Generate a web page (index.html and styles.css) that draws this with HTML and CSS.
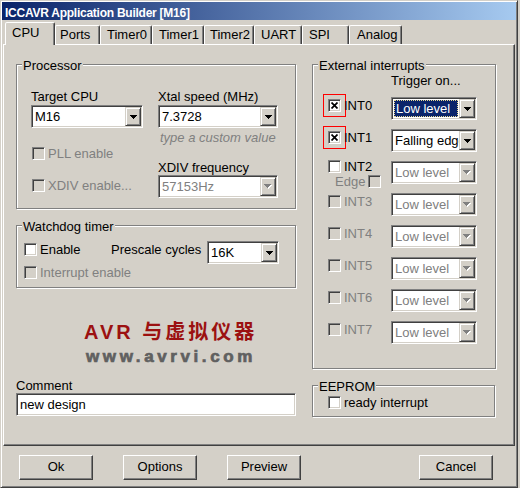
FILE: index.html
```html
<!DOCTYPE html>
<html>
<head>
<meta charset="utf-8">
<title>ICCAVR Application Builder</title>
<link rel="stylesheet" href="styles.css">
</head>
<body>
<div class="window">
  <div class="titlebar">ICCAVR Application Builder [M16]</div>
  <div class="body">
    <div class="tabs">
      <div class="tab sel t-cpu">CPU</div>
      <div class="tab t-ports">Ports</div>
      <div class="tab t-timer0">Timer0</div>
      <div class="tab t-timer1">Timer1</div>
      <div class="tab t-timer2">Timer2</div>
      <div class="tab t-uart">UART</div>
      <div class="tab t-spi">SPI</div>
      <div class="tab t-analog">Analog</div>
    </div>
    <div class="panel">
      <div class="col-left">
        <div class="group proc">
          <div class="gtitle">Processor</div>
          <div class="proc-grid">
            <div class="pcol pcol-a">
              <div class="lbl">Target CPU</div>
              <div class="combo cpu-combo"><span class="val">M16</span><span class="dd"><svg class="arr" width="7" height="4" viewBox="0 0 7 4"><path d="M0 0h7v1h-1v1h-1v1h-1v1h-1v-1h-1v-1h-1v-1h-1z"/></svg></span></div>
              <div class="chk dis pll"><span class="box"></span>PLL enable</div>
              <div class="chk dis xdiv-en"><span class="box"></span>XDIV enable...</div>
            </div>
            <div class="pcol pcol-b">
              <div class="lbl">Xtal speed (MHz)</div>
              <div class="combo xtal-combo"><span class="val">7.3728</span><span class="dd"><svg class="arr" width="7" height="4" viewBox="0 0 7 4"><path d="M0 0h7v1h-1v1h-1v1h-1v1h-1v-1h-1v-1h-1v-1h-1z"/></svg></span></div>
              <div class="hint">type a custom value</div>
              <div class="lbl xdiv-lbl">XDIV frequency</div>
              <div class="combo xtal-combo dis"><span class="val">57153Hz</span><span class="dd"><svg class="arr" width="8" height="5" viewBox="0 0 8 5"><path class="sh" d="M1 1h7v1h-1v1h-1v1h-1v1h-1v-1h-1v-1h-1v-1h-1z"/><path d="M0 0h7v1h-1v1h-1v1h-1v1h-1v-1h-1v-1h-1v-1h-1z"/></svg></span></div>
            </div>
          </div>
        </div>
        <div class="group wdt">
          <div class="gtitle">Watchdog timer</div>
          <div class="wdt-row">
            <div class="chk wdt-en"><span class="box"></span>Enable</div>
            <div class="prescale">Prescale cycles</div>
            <div class="combo k-combo"><span class="val">16K</span><span class="dd"><svg class="arr" width="7" height="4" viewBox="0 0 7 4"><path d="M0 0h7v1h-1v1h-1v1h-1v1h-1v-1h-1v-1h-1v-1h-1z"/></svg></span></div>
          </div>
          <div class="chk dis wdt-int"><span class="box"></span>Interrupt enable</div>
        </div>
        <div class="logo">
          <div class="logo-cn">AVR 与虚拟仪器</div>
          <div class="logo-url">www.avrvi.com</div>
        </div>
        <div class="lbl comment-lbl">Comment</div>
        <div class="textbox">new design</div>
      </div>

      <div class="col-right">
        <div class="group ext">
          <div class="gtitle">External interrupts</div>
          <div class="trig">Trigger on...</div>
          <div class="int-rows">
            <div class="int-row">
              <div class="ileft"><div class="chk"><span class="box on mark"><svg width="7" height="7" viewBox="0 0 7 7"><path d="M0.5 0.5L6.5 6.5M6.5 0.5L0.5 6.5"/></svg></span>INT0</div></div>
              <div class="combo icombo"><span class="val sel">Low level</span><span class="dd"><svg class="arr" width="7" height="4" viewBox="0 0 7 4"><path d="M0 0h7v1h-1v1h-1v1h-1v1h-1v-1h-1v-1h-1v-1h-1z"/></svg></span></div>
            </div>
            <div class="int-row">
              <div class="ileft"><div class="chk"><span class="box on mark"><svg width="7" height="7" viewBox="0 0 7 7"><path d="M0.5 0.5L6.5 6.5M6.5 0.5L0.5 6.5"/></svg></span>INT1</div></div>
              <div class="combo icombo"><span class="val">Falling edge</span><span class="dd"><svg class="arr" width="7" height="4" viewBox="0 0 7 4"><path d="M0 0h7v1h-1v1h-1v1h-1v1h-1v-1h-1v-1h-1v-1h-1z"/></svg></span></div>
            </div>
            <div class="int-row">
              <div class="ileft">
                <div class="chk int2"><span class="box"></span>INT2</div>
                <div class="chk dis edge">Edge<span class="box after"></span></div>
              </div>
              <div class="combo icombo dis"><span class="val">Low level</span><span class="dd"><svg class="arr" width="8" height="5" viewBox="0 0 8 5"><path class="sh" d="M1 1h7v1h-1v1h-1v1h-1v1h-1v-1h-1v-1h-1v-1h-1z"/><path d="M0 0h7v1h-1v1h-1v1h-1v1h-1v-1h-1v-1h-1v-1h-1z"/></svg></span></div>
            </div>
            <div class="int-row">
              <div class="ileft"><div class="chk dis"><span class="box"></span>INT3</div></div>
              <div class="combo icombo dis"><span class="val">Low level</span><span class="dd"><svg class="arr" width="8" height="5" viewBox="0 0 8 5"><path class="sh" d="M1 1h7v1h-1v1h-1v1h-1v1h-1v-1h-1v-1h-1v-1h-1z"/><path d="M0 0h7v1h-1v1h-1v1h-1v1h-1v-1h-1v-1h-1v-1h-1z"/></svg></span></div>
            </div>
            <div class="int-row">
              <div class="ileft"><div class="chk dis"><span class="box"></span>INT4</div></div>
              <div class="combo icombo dis"><span class="val">Low level</span><span class="dd"><svg class="arr" width="8" height="5" viewBox="0 0 8 5"><path class="sh" d="M1 1h7v1h-1v1h-1v1h-1v1h-1v-1h-1v-1h-1v-1h-1z"/><path d="M0 0h7v1h-1v1h-1v1h-1v1h-1v-1h-1v-1h-1v-1h-1z"/></svg></span></div>
            </div>
            <div class="int-row">
              <div class="ileft"><div class="chk dis"><span class="box"></span>INT5</div></div>
              <div class="combo icombo dis"><span class="val">Low level</span><span class="dd"><svg class="arr" width="8" height="5" viewBox="0 0 8 5"><path class="sh" d="M1 1h7v1h-1v1h-1v1h-1v1h-1v-1h-1v-1h-1v-1h-1z"/><path d="M0 0h7v1h-1v1h-1v1h-1v1h-1v-1h-1v-1h-1v-1h-1z"/></svg></span></div>
            </div>
            <div class="int-row">
              <div class="ileft"><div class="chk dis"><span class="box"></span>INT6</div></div>
              <div class="combo icombo dis"><span class="val">Low level</span><span class="dd"><svg class="arr" width="8" height="5" viewBox="0 0 8 5"><path class="sh" d="M1 1h7v1h-1v1h-1v1h-1v1h-1v-1h-1v-1h-1v-1h-1z"/><path d="M0 0h7v1h-1v1h-1v1h-1v1h-1v-1h-1v-1h-1v-1h-1z"/></svg></span></div>
            </div>
            <div class="int-row">
              <div class="ileft"><div class="chk dis"><span class="box"></span>INT7</div></div>
              <div class="combo icombo dis"><span class="val">Low level</span><span class="dd"><svg class="arr" width="8" height="5" viewBox="0 0 8 5"><path class="sh" d="M1 1h7v1h-1v1h-1v1h-1v1h-1v-1h-1v-1h-1v-1h-1z"/><path d="M0 0h7v1h-1v1h-1v1h-1v1h-1v-1h-1v-1h-1v-1h-1z"/></svg></span></div>
            </div>
          </div>
        </div>
        <div class="group eeprom">
          <div class="gtitle">EEPROM</div>
          <div class="chk ee-chk"><span class="box"></span>ready interrupt</div>
        </div>
      </div>
    </div>
    <div class="buttons">
      <div class="btn">Ok</div>
      <div class="btn">Options</div>
      <div class="btn">Preview</div>
      <div class="btn cancel">Cancel</div>
    </div>
  </div>
</div>
</body>
</html>
```

FILE: styles.css
```css
* { box-sizing: border-box; }

body {
  margin: 0;
  width: 520px;
  height: 488px;
  background: #d4d0c8;
  font-family: "Liberation Sans", Arial, sans-serif;
  font-size: 13px;
  line-height: 15px;
  color: #000;
}

.window {
  width: 518px;
  height: 488px;
  border: 1px solid;
  border-color: #d4d0c8 #404040 #404040 #d4d0c8;
  box-shadow: inset 1px 1px #fff, inset -1px -1px #808080;
  padding: 1px;
  background: #d4d0c8;
}

.titlebar {
  height: 18px;
  background: linear-gradient(to right, #0a246a, #a6caf0);
  color: #fff;
  font-weight: bold;
  font-size: 12px;
  letter-spacing: -0.25px;
  line-height: 16px;
  padding: 3px 0 0 3px;
  white-space: nowrap;
  overflow: hidden;
}

.body {
  padding: 0 1px;
}

/* Tabs */
.tabs {
  display: flex;
  align-items: flex-end;
  height: 24px;
  padding-left: 2px;
}

.tab {
  height: 19px;
  border-style: solid;
  border-width: 1px 1px 0 1px;
  border-color: #fff #404040 transparent #fff;
  border-radius: 2px 2px 0 0;
  box-shadow: inset -1px 0 #808080;
  padding-left: 6px;
  line-height: 17px;
  white-space: nowrap;
}

.tab.sel {
  height: 23px;
  margin-bottom: -1px;
  position: relative;
  z-index: 1;
  background: #d4d0c8;
  line-height: 19px;
}

.t-cpu { width: 50px; }
.t-ports { width: 45px; padding-left: 4px; }
.t-timer0 { width: 52px; }
.t-timer1 { width: 52px; }
.t-timer2 { width: 50px; padding-left: 5px; }
.t-uart { width: 48px; }
.t-spi { width: 47px; }
.t-analog { width: 53px; padding-left: 7px; }

/* Panel */
.panel {
  height: 402px;
  border: 1px solid;
  border-color: #fff #404040 #404040 #fff;
  box-shadow: inset -1px -1px #808080;
  display: grid;
  grid-template-columns: 280px 184px;
  column-gap: 16px;
  align-content: start;
  align-items: start;
  padding: 19px 0 0 12px;
}

/* Group boxes */
.group {
  border: 1px solid #808080;
  box-shadow: inset 1px 1px #fff, 1px 1px #fff;
}

.gtitle {
  width: max-content;
  margin: -7px 0 0 5px;
  padding: 0 1px;
  background: #d4d0c8;
  white-space: nowrap;
}

.lbl { white-space: nowrap; }

/* Checkboxes */
.chk {
  display: flex;
  align-items: center;
  height: 15px;
  white-space: nowrap;
}

.box {
  width: 13px;
  height: 13px;
  flex: none;
  margin-right: 3px;
  border: 1px solid;
  border-color: #808080 #fff #fff #808080;
  box-shadow: inset 1px 1px #404040, inset -1px -1px #d4d0c8;
  background: #fff;
  display: flex;
  align-items: center;
  justify-content: center;
}

.box svg path {
  stroke: #000;
  stroke-width: 1.7;
  fill: none;
}

.box.mark {
  outline: 1px solid #ff0000;
  outline-offset: 4px;
}

.box.after {
  margin: 0 0 0 3px;
}

.chk.dis { color: #808080; }
.chk.dis .box { background: #d4d0c8; }

/* Combo boxes */
.combo {
  display: flex;
  height: 23px;
  border: 1px solid;
  border-color: #808080 #fff #fff #808080;
  box-shadow: inset 1px 1px #404040, inset -1px -1px #d4d0c8;
  background: #fff;
  padding: 1px;
}

.combo .val {
  flex: 1;
  min-width: 0;
  padding-left: 2px;
  line-height: 19px;
  white-space: nowrap;
  overflow: hidden;
}

.combo .val.sel {
  margin: 1px 1px 1px 1px;
  padding-left: 1px;
  line-height: 15px;
  background: #0a246a;
  color: #fff;
  border: 1px dotted #e8d890;
}

.combo .dd {
  width: 16px;
  flex: none;
  border: 1px solid;
  border-color: #d4d0c8 #404040 #404040 #d4d0c8;
  box-shadow: inset 1px 1px #fff, inset -1px -1px #808080;
  background: #d4d0c8;
  display: flex;
  align-items: center;
  justify-content: center;
}

.arr { display: block; shape-rendering: crispEdges; }
.arr path { fill: #000; }

.combo.dis .val { color: #808080; }
.combo.dis .arr path { fill: #808080; }
.combo.dis .arr path.sh { fill: #fff; }

/* Processor */
.proc { height: 145px; }

.proc-grid {
  display: flex;
  gap: 15px;
  margin-top: 16px;
  padding-left: 14px;
}

.pcol-a { width: 112px; }
.pcol-b { width: 120px; }

.pcol .lbl { margin-bottom: 1px; }

.pll { margin: 18px 0 0 1px; }
.xdiv-en { margin: 17px 0 0 1px; }

.hint {
  margin-top: 2px;
  padding-left: 2px;
  font-style: italic;
  color: #808080;
  white-space: nowrap;
}

.pcol .xdiv-lbl { margin-top: 15px; margin-bottom: 0; }

/* Watchdog */
.wdt {
  height: 63px;
  margin-top: 16px;
  padding-left: 7px;
}

.wdt .gtitle { margin-left: -2px; }

.wdt-row {
  display: flex;
  align-items: flex-start;
  margin-top: 7px;
}

.wdt-en { width: 87px; margin-top: 1px; }

.prescale {
  width: 96px;
  margin-top: 1px;
  white-space: nowrap;
}

.k-combo { width: 72px; }

.wdt-int { margin-top: 1px; }

/* Logo */
.logo {
  margin-top: 32px;
  padding-left: 68px;
}

.logo-cn {
  height: 24px;
  color: #9c1111;
  font-family: "Liberation Sans", "Noto Sans CJK SC", sans-serif;
  font-size: 20px;
  font-weight: bold;
  line-height: 24px;
  letter-spacing: 3px;
  white-space: nowrap;
}

.logo-url {
  height: 20px;
  margin-top: 3px;
  padding-left: 2px;
  color: #606060;
  font-size: 17px;
  font-weight: bold;
  line-height: 20px;
  letter-spacing: 3.6px;
  -webkit-text-stroke: 0.7px #606060;
  white-space: nowrap;
}

.comment-lbl { margin-top: 11px; }

.textbox {
  height: 23px;
  border: 1px solid;
  border-color: #808080 #fff #fff #808080;
  box-shadow: inset 1px 1px #404040, inset -1px -1px #d4d0c8;
  background: #fff;
  padding: 1px 0 0 3px;
  line-height: 19px;
  white-space: nowrap;
}

/* External interrupts */
.ext { height: 305px; }

.trig {
  margin-left: 78px;
  white-space: nowrap;
}

.int-rows { margin-top: 9px; }

.int-row {
  display: flex;
  height: 32px;
}

.ileft {
  width: 78px;
  padding-left: 15px;
}

.ileft .chk { margin-top: 1px; }
.ileft .chk.int2 { margin-top: -2px; }
.ileft .chk.edge { margin-top: 0; padding-left: 7px; }

.icombo { width: 86px; }

.eeprom {
  width: 183px;
  height: 32px;
  margin-top: 16px;
  padding-left: 15px;
}

.eeprom .gtitle { margin-left: -10px; }

.ee-chk { margin-top: 1px; }

/* Buttons */
.buttons {
  display: flex;
  gap: 30px;
  margin-top: 9px;
  padding: 0 22px 0 16px;
}

.btn {
  width: 74px;
  height: 25px;
  border: 1px solid;
  border-color: #fff #404040 #404040 #fff;
  box-shadow: inset -1px -1px #808080;
  text-align: center;
  line-height: 22px;
}

.btn.cancel { margin-left: auto; }
```
